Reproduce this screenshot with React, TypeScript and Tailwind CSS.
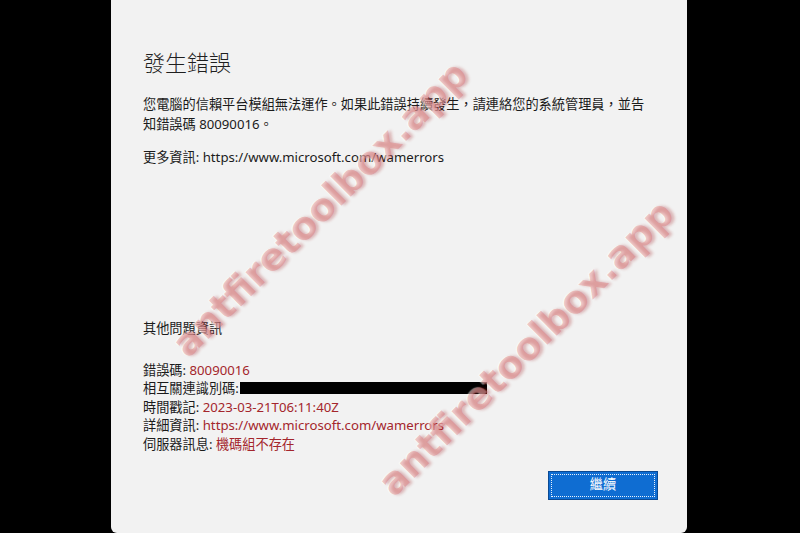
import React from "react";

const font = {
  fontFamily: '"Noto Sans", "Noto Sans CJK TC", sans-serif',
};

function Watermark({ cx, cy }: { cx: number; cy: number }) {
  return (
    <div
      className="pointer-events-none absolute whitespace-nowrap text-[38px] font-bold leading-none text-[rgba(215,95,95,0.32)] [text-shadow:2px_2px_3px_rgba(160,30,30,0.28),-1px_-1px_1px_rgba(255,255,255,0.5)]"
      style={{
        left: cx,
        top: cy,
        transform: "translate(-50%, -50%) rotate(-45deg)",
        fontFamily: '"DejaVu Sans", Verdana, sans-serif',
      }}
    >
      antfiretoolbox.app
    </div>
  );
}

export default function App() {
  const rows: [string, string | null][] = [
    ["錯誤碼:\u00a0", "80090016"],
    ["相互關連識別碼:", null],
    ["時間戳記:\u00a0", "2023-03-21T06:11:40Z"],
    ["詳細資訊:\u00a0", "https://www.microsoft.com/wamerrors"],
    ["伺服器訊息:\u00a0", "機碼組不存在"],
  ];
  return (
    <div className="relative h-[533px] w-[800px] overflow-hidden bg-black" style={font}>
      <div className="flex h-full pl-[111px]">
        <div className="flex h-full w-[576px] flex-col rounded-b-[6px] bg-[#f2f2f2] pl-[32px] pr-[29px] pt-[47px] text-[#1b1b1b]">
          <h1 className="text-[22px] font-light leading-[30px] text-[#1f1f1f]">發生錯誤</h1>
          <p className="mt-[17px] w-[510px] text-[13.2px] leading-[20px]">
            您電腦的信賴平台模組無法運作。如果此錯誤持續發生，請連絡您的系統管理員，並告知錯誤碼 80090016。
          </p>
          <p className="mt-[13px] text-[13.2px] leading-[20px]">
            更多資訊: https://www.microsoft.com/wamerrors
          </p>
          <p className="mt-[151px] text-[13.2px] leading-[20px]">其他問題資訊</p>
          <div className="mt-[22.5px] flex flex-col text-[13.2px] leading-[18.5px]">
            {rows.map(([k, v]) => (
              <div key={k} className="whitespace-nowrap">
                <span>{k}</span>
                {v === null ? (
                  <span className="ml-[1px] inline-block h-[12px] w-[247px] bg-black align-[-1px]" />
                ) : (
                  <span className="text-[#a4262c]">{v}</span>
                )}
              </div>
            ))}
          </div>
          <div className="mt-[17.5px] flex justify-end">
            <button className="relative flex h-[29px] w-[110px] items-center justify-center border border-[#0b4a94] bg-[#0f6dd2] text-[13.2px] text-white">
              <span className="pointer-events-none absolute inset-[2px] border border-dotted border-white/90" />
              繼續
            </button>
          </div>
        </div>
      </div>
      <Watermark cx={320} cy={209} />
      <Watermark cx={526} cy={348} />
    </div>
  );
}
